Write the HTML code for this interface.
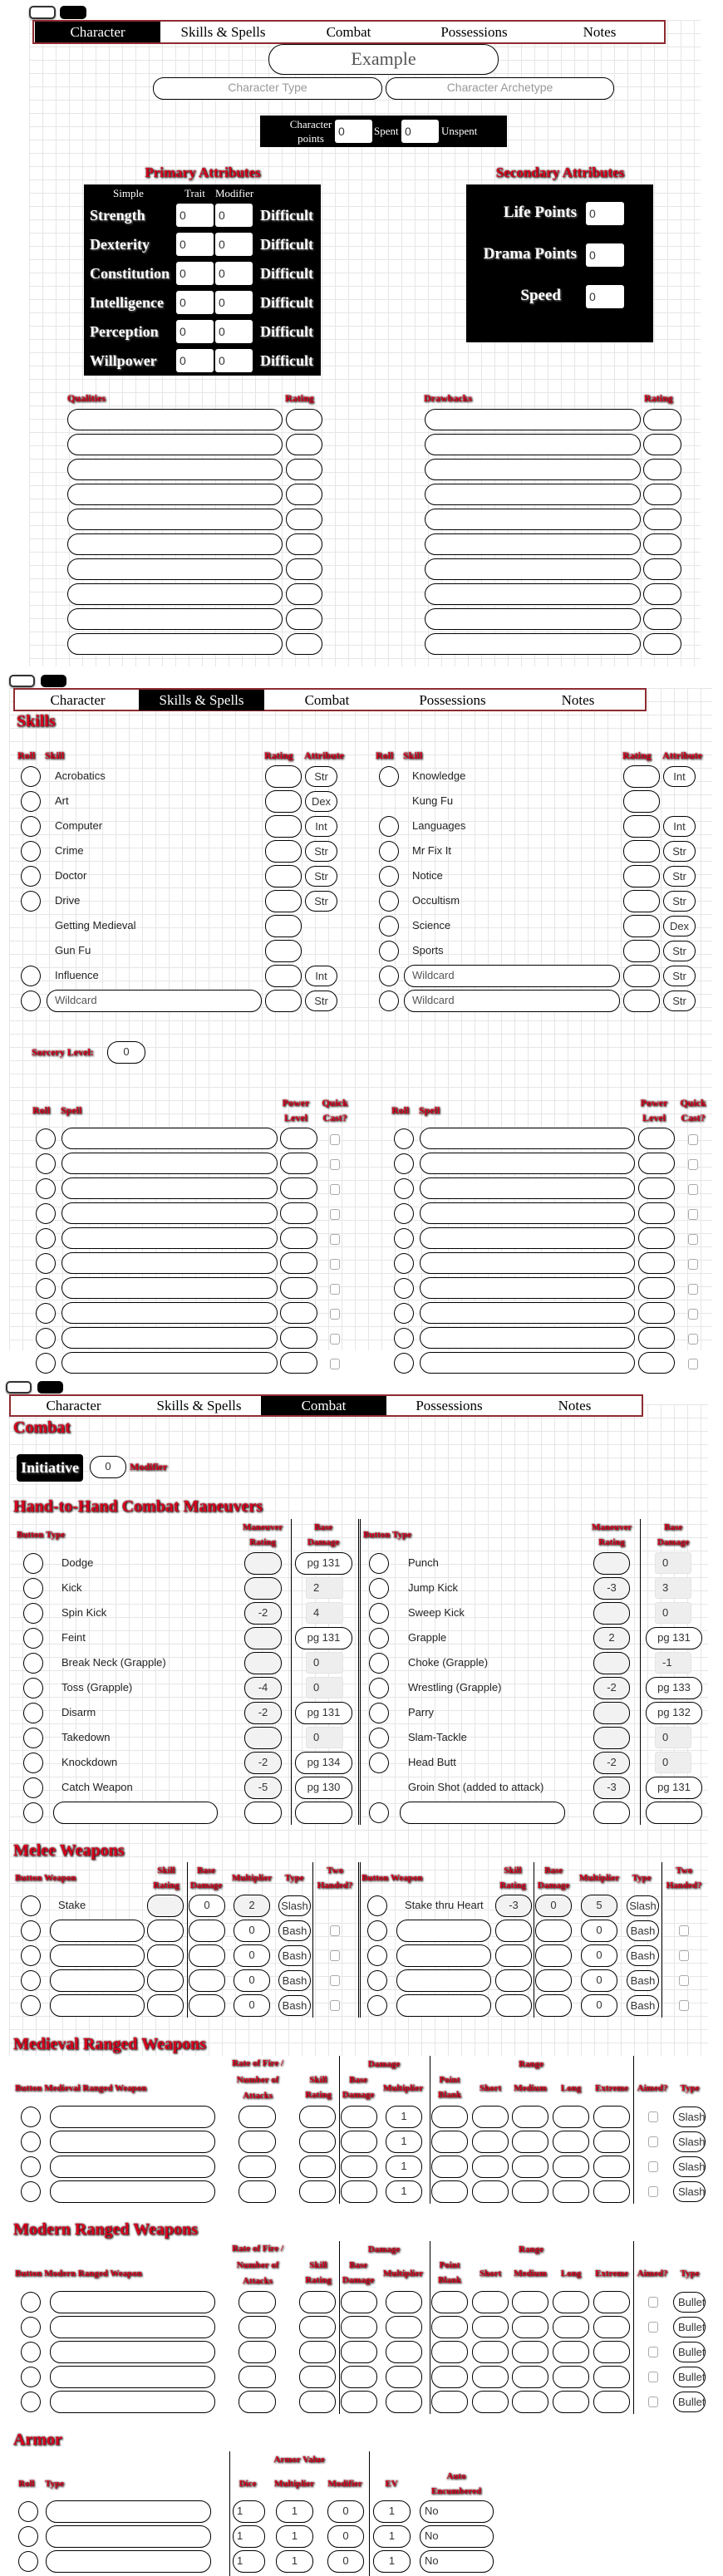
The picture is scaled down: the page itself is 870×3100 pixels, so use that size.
<!DOCTYPE html>
<html><head><meta charset="utf-8"><style>
*{margin:0;padding:0}
body{width:870px;height:3100px;position:relative;background:#fff;overflow:hidden;font-family:"Liberation Sans",sans-serif}
div,i,b,s,u{position:absolute;display:block;box-sizing:border-box;font-style:normal;text-decoration:none}
.grid{background-color:#fff;background-image:linear-gradient(#e6e6e6 1px,transparent 1px),linear-gradient(90deg,#e6e6e6 1px,transparent 1px);background-size:16px 16px}
.tb{border:2px solid #8e2b30;background:#fff;height:29px}
.tb u{top:0;height:25px;width:151px;text-align:center;font:17px/25px "Liberation Serif",serif;color:#000}
.tb u.a{background:#000;color:#fff}
.bw{width:32px;height:16px;border:2px solid #333;border-radius:5px;background:#fff;box-shadow:0 1px 2px #888}
.bk{width:32px;height:16px;border-radius:5px;background:#000}
.h{color:#d8001c;font:bold 20px/24px "Liberation Serif",serif;text-shadow:1px 1px 2px #000,0 0 2px #300;white-space:nowrap}
.s{color:#d8001c;font:bold 11px/18px "Liberation Serif",serif;text-shadow:1px 1px 2px #000,0 0 2px #300;white-space:nowrap}
.cc{transform:translateX(-50%);text-align:center}
.p{height:26px;border:1.5px solid #000;border-radius:13px;background:#fff;font:13px/23px "Liberation Sans",sans-serif;color:#333;text-align:center;overflow:hidden;white-space:nowrap}
.p.l{text-align:left;padding-left:9px;color:#555}
.p.f{background:#f2f2f2}
.g{height:26px;width:45px;background:#eee;border:1px solid #e4e4e4;border-radius:3px;font:13px/24px "Liberation Sans",sans-serif;color:#333;padding-left:8px}
.c{width:24px;height:25px;border:1.5px solid #000;border-radius:50%;background:#fff}
.k{width:12px;height:13px;border:1px solid #aaa;border-radius:3px;background:#fff}
.t{font:13px/18px "Liberation Sans",sans-serif;color:#222;white-space:nowrap}
.v{width:1px;background:#000}
.w{background:#fff;border-radius:3px;height:28px;width:45px;font:14px/28px "Liberation Sans",sans-serif;color:#333;padding-left:4px}
.wl{color:#fff;font:bold 18px/22px "Liberation Serif",serif;text-shadow:1px 1px 2px #888;white-space:nowrap}
</style></head><body>

<div class="grid" style="left:35px;top:24px;width:808px;height:778px"></div>
<div class="grid" style="left:11px;top:828px;width:846px;height:797px"></div>
<div class="grid" style="left:11px;top:1690px;width:841px;height:787px"></div>

<!-- SECTION 1 -->
<i class="bw" style="left:35px;top:7px"></i><i class="bk" style="left:72px;top:7px"></i>
<div class="tb" style="left:39px;top:24px;width:762px"><u class="a" style="left:1px">Character</u><u style="left:152px">Skills &amp; Spells</u><u style="left:303px">Combat</u><u style="left:454px">Possessions</u><u style="left:605px">Notes</u></div>
<div class="p" style="left:323px;top:53px;width:277px;height:37px;border-radius:18px;font:22px/34px 'Liberation Serif',serif;color:#555">Example</div>
<div class="p" style="left:184px;top:93px;width:276px;height:27px;color:#999;font-size:14px">Character Type</div>
<div class="p" style="left:464px;top:93px;width:275px;height:27px;color:#999;font-size:14px">Character Archetype</div>
<div style="left:313px;top:139px;width:297px;height:38px;background:#000"></div>
<div style="left:345px;top:141px;width:58px;text-align:center;color:#fff;font:13px/17px 'Liberation Serif',serif">Character<br>points</div>
<div class="w" style="left:403px;top:144px">0</div>
<div style="left:450px;top:149px;color:#fff;font:13px/18px 'Liberation Serif',serif">Spent</div>
<div class="w" style="left:483px;top:144px">0</div>
<div style="left:531px;top:149px;color:#fff;font:13px/18px 'Liberation Serif',serif">Unspent</div>

<div class="h cc" style="left:244px;top:196px;font-size:17px">Primary Attributes</div>
<div class="h cc" style="left:674px;top:196px;font-size:17px">Secondary Attributes</div>

<div style="left:101px;top:222px;width:285px;height:230px;background:#000"></div>
<div style="left:136px;top:224px;color:#fff;font:13px/18px 'Liberation Serif',serif">Simple</div>
<div style="left:222px;top:224px;color:#fff;font:13px/18px 'Liberation Serif',serif">Trait</div>
<div style="left:259px;top:224px;color:#fff;font:13px/18px 'Liberation Serif',serif">Modifier</div>
<div class="wl" style="left:108px;top:248px">Strength</div><div class="w" style="left:212px;top:245px">0</div><div class="w" style="left:259px;top:245px">0</div><div class="wl" style="left:313px;top:248px">Difficult</div>
<div class="wl" style="left:108px;top:283px">Dexterity</div><div class="w" style="left:212px;top:280px">0</div><div class="w" style="left:259px;top:280px">0</div><div class="wl" style="left:313px;top:283px">Difficult</div>
<div class="wl" style="left:108px;top:318px">Constitution</div><div class="w" style="left:212px;top:315px">0</div><div class="w" style="left:259px;top:315px">0</div><div class="wl" style="left:313px;top:318px">Difficult</div>
<div class="wl" style="left:108px;top:353px">Intelligence</div><div class="w" style="left:212px;top:350px">0</div><div class="w" style="left:259px;top:350px">0</div><div class="wl" style="left:313px;top:353px">Difficult</div>
<div class="wl" style="left:108px;top:388px">Perception</div><div class="w" style="left:212px;top:385px">0</div><div class="w" style="left:259px;top:385px">0</div><div class="wl" style="left:313px;top:388px">Difficult</div>
<div class="wl" style="left:108px;top:423px">Willpower</div><div class="w" style="left:212px;top:420px">0</div><div class="w" style="left:259px;top:420px">0</div><div class="wl" style="left:313px;top:423px">Difficult</div>

<div style="left:561px;top:222px;width:225px;height:190px;background:#000"></div>
<div class="wl" style="left:560px;top:245px;width:134px;text-align:right;font-size:19px">Life Points</div><div class="w" style="left:705px;top:243px;width:46px">0</div>
<div class="wl" style="left:560px;top:295px;width:134px;text-align:right;font-size:19px">Drama Points</div><div class="w" style="left:705px;top:293px;width:46px">0</div>
<div class="wl" style="left:560px;top:345px;width:115px;text-align:right;font-size:19px">Speed</div><div class="w" style="left:705px;top:343px;width:46px">0</div>

<div class="s" style="left:81px;top:470px;font-size:12px">Qualities</div>
<div class="s" style="left:343px;top:470px;font-size:12px">Rating</div>
<div class="s" style="left:510px;top:470px;font-size:12px">Drawbacks</div>
<div class="s" style="left:775px;top:470px;font-size:12px">Rating</div>
<i class="p" style="left:81px;top:492px;width:259px"></i><i class="p" style="left:344px;top:492px;width:44px"></i><i class="p" style="left:511px;top:492px;width:260px"></i><i class="p" style="left:774px;top:492px;width:46px"></i>
<i class="p" style="left:81px;top:522px;width:259px"></i><i class="p" style="left:344px;top:522px;width:44px"></i><i class="p" style="left:511px;top:522px;width:260px"></i><i class="p" style="left:774px;top:522px;width:46px"></i>
<i class="p" style="left:81px;top:552px;width:259px"></i><i class="p" style="left:344px;top:552px;width:44px"></i><i class="p" style="left:511px;top:552px;width:260px"></i><i class="p" style="left:774px;top:552px;width:46px"></i>
<i class="p" style="left:81px;top:582px;width:259px"></i><i class="p" style="left:344px;top:582px;width:44px"></i><i class="p" style="left:511px;top:582px;width:260px"></i><i class="p" style="left:774px;top:582px;width:46px"></i>
<i class="p" style="left:81px;top:612px;width:259px"></i><i class="p" style="left:344px;top:612px;width:44px"></i><i class="p" style="left:511px;top:612px;width:260px"></i><i class="p" style="left:774px;top:612px;width:46px"></i>
<i class="p" style="left:81px;top:642px;width:259px"></i><i class="p" style="left:344px;top:642px;width:44px"></i><i class="p" style="left:511px;top:642px;width:260px"></i><i class="p" style="left:774px;top:642px;width:46px"></i>
<i class="p" style="left:81px;top:672px;width:259px"></i><i class="p" style="left:344px;top:672px;width:44px"></i><i class="p" style="left:511px;top:672px;width:260px"></i><i class="p" style="left:774px;top:672px;width:46px"></i>
<i class="p" style="left:81px;top:702px;width:259px"></i><i class="p" style="left:344px;top:702px;width:44px"></i><i class="p" style="left:511px;top:702px;width:260px"></i><i class="p" style="left:774px;top:702px;width:46px"></i>
<i class="p" style="left:81px;top:732px;width:259px"></i><i class="p" style="left:344px;top:732px;width:44px"></i><i class="p" style="left:511px;top:732px;width:260px"></i><i class="p" style="left:774px;top:732px;width:46px"></i>
<i class="p" style="left:81px;top:762px;width:259px"></i><i class="p" style="left:344px;top:762px;width:44px"></i><i class="p" style="left:511px;top:762px;width:260px"></i><i class="p" style="left:774px;top:762px;width:46px"></i>

<!-- SECTION 2 -->
<i class="bw" style="left:11px;top:812px;width:31px;height:15px"></i><i class="bk" style="left:49px;top:812px;width:31px;height:15px"></i>
<div class="tb" style="left:16px;top:828px;width:762px;height:28px"><u style="left:0">Character</u><u class="a" style="left:149px">Skills &amp; Spells</u><u style="left:300px">Combat</u><u style="left:451px">Possessions</u><u style="left:602px">Notes</u></div>
<div class="h" style="left:20px;top:856px">Skills</div>
<div class="s" style="left:21px;top:900px;font-size:12px">Roll</div><div class="s" style="left:54px;top:900px;font-size:12px">Skill</div><div class="s" style="left:318px;top:900px;font-size:12px">Rating</div><div class="s" style="left:366px;top:900px;font-size:12px">Attribute</div>
<div class="s" style="left:452px;top:900px;font-size:12px">Roll</div><div class="s" style="left:485px;top:900px;font-size:12px">Skill</div><div class="s" style="left:749px;top:900px;font-size:12px">Rating</div><div class="s" style="left:797px;top:900px;font-size:12px">Attribute</div>

<i class="c" style="left:25px;top:922px"></i><div class="t" style="left:66px;top:925px">Acrobatics</div><i class="p" style="left:319px;top:921px;width:44px;height:27px"></i><div class="p" style="left:367px;top:922px;width:39px;height:25px">Str</div>
<i class="c" style="left:25px;top:952px"></i><div class="t" style="left:66px;top:955px">Art</div><i class="p" style="left:319px;top:951px;width:44px;height:27px"></i><div class="p" style="left:367px;top:952px;width:39px;height:25px">Dex</div>
<i class="c" style="left:25px;top:982px"></i><div class="t" style="left:66px;top:985px">Computer</div><i class="p" style="left:319px;top:981px;width:44px;height:27px"></i><div class="p" style="left:367px;top:982px;width:39px;height:25px">Int</div>
<i class="c" style="left:25px;top:1012px"></i><div class="t" style="left:66px;top:1015px">Crime</div><i class="p" style="left:319px;top:1011px;width:44px;height:27px"></i><div class="p" style="left:367px;top:1012px;width:39px;height:25px">Str</div>
<i class="c" style="left:25px;top:1042px"></i><div class="t" style="left:66px;top:1045px">Doctor</div><i class="p" style="left:319px;top:1041px;width:44px;height:27px"></i><div class="p" style="left:367px;top:1042px;width:39px;height:25px">Str</div>
<i class="c" style="left:25px;top:1072px"></i><div class="t" style="left:66px;top:1075px">Drive</div><i class="p" style="left:319px;top:1071px;width:44px;height:27px"></i><div class="p" style="left:367px;top:1072px;width:39px;height:25px">Str</div>
<div class="t" style="left:66px;top:1105px">Getting Medieval</div><i class="p" style="left:319px;top:1101px;width:44px;height:27px"></i>
<div class="t" style="left:66px;top:1135px">Gun Fu</div><i class="p" style="left:319px;top:1131px;width:44px;height:27px"></i>
<i class="c" style="left:25px;top:1162px"></i><div class="t" style="left:66px;top:1165px">Influence</div><i class="p" style="left:319px;top:1161px;width:44px;height:27px"></i><div class="p" style="left:367px;top:1162px;width:39px;height:25px">Int</div>
<i class="c" style="left:25px;top:1192px"></i><div class="p l" style="left:56px;top:1191px;width:259px;height:27px">Wildcard</div><i class="p" style="left:319px;top:1191px;width:44px;height:27px"></i><div class="p" style="left:367px;top:1192px;width:39px;height:25px">Str</div>

<i class="c" style="left:456px;top:922px"></i><div class="t" style="left:496px;top:925px">Knowledge</div><i class="p" style="left:750px;top:921px;width:44px;height:27px"></i><div class="p" style="left:798px;top:922px;width:39px;height:25px">Int</div>
<div class="t" style="left:496px;top:955px">Kung Fu</div><i class="p" style="left:750px;top:951px;width:44px;height:27px"></i>
<i class="c" style="left:456px;top:982px"></i><div class="t" style="left:496px;top:985px">Languages</div><i class="p" style="left:750px;top:981px;width:44px;height:27px"></i><div class="p" style="left:798px;top:982px;width:39px;height:25px">Int</div>
<i class="c" style="left:456px;top:1012px"></i><div class="t" style="left:496px;top:1015px">Mr Fix It</div><i class="p" style="left:750px;top:1011px;width:44px;height:27px"></i><div class="p" style="left:798px;top:1012px;width:39px;height:25px">Str</div>
<i class="c" style="left:456px;top:1042px"></i><div class="t" style="left:496px;top:1045px">Notice</div><i class="p" style="left:750px;top:1041px;width:44px;height:27px"></i><div class="p" style="left:798px;top:1042px;width:39px;height:25px">Str</div>
<i class="c" style="left:456px;top:1072px"></i><div class="t" style="left:496px;top:1075px">Occultism</div><i class="p" style="left:750px;top:1071px;width:44px;height:27px"></i><div class="p" style="left:798px;top:1072px;width:39px;height:25px">Str</div>
<i class="c" style="left:456px;top:1102px"></i><div class="t" style="left:496px;top:1105px">Science</div><i class="p" style="left:750px;top:1101px;width:44px;height:27px"></i><div class="p" style="left:798px;top:1102px;width:39px;height:25px">Dex</div>
<i class="c" style="left:456px;top:1132px"></i><div class="t" style="left:496px;top:1135px">Sports</div><i class="p" style="left:750px;top:1131px;width:44px;height:27px"></i><div class="p" style="left:798px;top:1132px;width:39px;height:25px">Str</div>
<i class="c" style="left:456px;top:1162px"></i><div class="p l" style="left:486px;top:1161px;width:260px;height:27px">Wildcard</div><i class="p" style="left:750px;top:1161px;width:44px;height:27px"></i><div class="p" style="left:798px;top:1162px;width:39px;height:25px">Str</div>
<i class="c" style="left:456px;top:1192px"></i><div class="p l" style="left:486px;top:1191px;width:260px;height:27px">Wildcard</div><i class="p" style="left:750px;top:1191px;width:44px;height:27px"></i><div class="p" style="left:798px;top:1192px;width:39px;height:25px">Str</div>

<div class="s" style="left:38px;top:1257px;font-size:12px">Sorcery Level:</div>
<div class="p" style="left:129px;top:1253px;width:46px;height:27px">0</div>

<div class="s" style="left:39px;top:1327px;font-size:12px">Roll</div><div class="s" style="left:73px;top:1327px;font-size:12px">Spell</div>
<div class="s cc" style="left:356px;top:1318px;font-size:12px">Power<br>Level</div><div class="s cc" style="left:403px;top:1318px;font-size:12px">Quick<br>Cast?</div>
<div class="s" style="left:471px;top:1327px;font-size:12px">Roll</div><div class="s" style="left:504px;top:1327px;font-size:12px">Spell</div>
<div class="s cc" style="left:787px;top:1318px;font-size:12px">Power<br>Level</div><div class="s cc" style="left:834px;top:1318px;font-size:12px">Quick<br>Cast?</div>

<i class="c" style="left:43px;top:1358px"></i><i class="p" style="left:74px;top:1357px;width:260px"></i><i class="p" style="left:337px;top:1357px;width:45px"></i><i class="k" style="left:397px;top:1365px"></i><i class="c" style="left:474px;top:1358px"></i><i class="p" style="left:505px;top:1357px;width:259px"></i><i class="p" style="left:768px;top:1357px;width:44px"></i><i class="k" style="left:828px;top:1365px"></i>
<i class="c" style="left:43px;top:1388px"></i><i class="p" style="left:74px;top:1387px;width:260px"></i><i class="p" style="left:337px;top:1387px;width:45px"></i><i class="k" style="left:397px;top:1395px"></i><i class="c" style="left:474px;top:1388px"></i><i class="p" style="left:505px;top:1387px;width:259px"></i><i class="p" style="left:768px;top:1387px;width:44px"></i><i class="k" style="left:828px;top:1395px"></i>
<i class="c" style="left:43px;top:1418px"></i><i class="p" style="left:74px;top:1417px;width:260px"></i><i class="p" style="left:337px;top:1417px;width:45px"></i><i class="k" style="left:397px;top:1425px"></i><i class="c" style="left:474px;top:1418px"></i><i class="p" style="left:505px;top:1417px;width:259px"></i><i class="p" style="left:768px;top:1417px;width:44px"></i><i class="k" style="left:828px;top:1425px"></i>
<i class="c" style="left:43px;top:1448px"></i><i class="p" style="left:74px;top:1447px;width:260px"></i><i class="p" style="left:337px;top:1447px;width:45px"></i><i class="k" style="left:397px;top:1455px"></i><i class="c" style="left:474px;top:1448px"></i><i class="p" style="left:505px;top:1447px;width:259px"></i><i class="p" style="left:768px;top:1447px;width:44px"></i><i class="k" style="left:828px;top:1455px"></i>
<i class="c" style="left:43px;top:1478px"></i><i class="p" style="left:74px;top:1477px;width:260px"></i><i class="p" style="left:337px;top:1477px;width:45px"></i><i class="k" style="left:397px;top:1485px"></i><i class="c" style="left:474px;top:1478px"></i><i class="p" style="left:505px;top:1477px;width:259px"></i><i class="p" style="left:768px;top:1477px;width:44px"></i><i class="k" style="left:828px;top:1485px"></i>
<i class="c" style="left:43px;top:1508px"></i><i class="p" style="left:74px;top:1507px;width:260px"></i><i class="p" style="left:337px;top:1507px;width:45px"></i><i class="k" style="left:397px;top:1515px"></i><i class="c" style="left:474px;top:1508px"></i><i class="p" style="left:505px;top:1507px;width:259px"></i><i class="p" style="left:768px;top:1507px;width:44px"></i><i class="k" style="left:828px;top:1515px"></i>
<i class="c" style="left:43px;top:1538px"></i><i class="p" style="left:74px;top:1537px;width:260px"></i><i class="p" style="left:337px;top:1537px;width:45px"></i><i class="k" style="left:397px;top:1545px"></i><i class="c" style="left:474px;top:1538px"></i><i class="p" style="left:505px;top:1537px;width:259px"></i><i class="p" style="left:768px;top:1537px;width:44px"></i><i class="k" style="left:828px;top:1545px"></i>
<i class="c" style="left:43px;top:1568px"></i><i class="p" style="left:74px;top:1567px;width:260px"></i><i class="p" style="left:337px;top:1567px;width:45px"></i><i class="k" style="left:397px;top:1575px"></i><i class="c" style="left:474px;top:1568px"></i><i class="p" style="left:505px;top:1567px;width:259px"></i><i class="p" style="left:768px;top:1567px;width:44px"></i><i class="k" style="left:828px;top:1575px"></i>
<i class="c" style="left:43px;top:1598px"></i><i class="p" style="left:74px;top:1597px;width:260px"></i><i class="p" style="left:337px;top:1597px;width:45px"></i><i class="k" style="left:397px;top:1605px"></i><i class="c" style="left:474px;top:1598px"></i><i class="p" style="left:505px;top:1597px;width:259px"></i><i class="p" style="left:768px;top:1597px;width:44px"></i><i class="k" style="left:828px;top:1605px"></i>
<i class="c" style="left:43px;top:1628px"></i><i class="p" style="left:74px;top:1627px;width:260px"></i><i class="p" style="left:337px;top:1627px;width:45px"></i><i class="k" style="left:397px;top:1635px"></i><i class="c" style="left:474px;top:1628px"></i><i class="p" style="left:505px;top:1627px;width:259px"></i><i class="p" style="left:768px;top:1627px;width:44px"></i><i class="k" style="left:828px;top:1635px"></i>

<!-- SECTION 3 -->
<i class="bw" style="left:7px;top:1662px;width:31px;height:15px"></i><i class="bk" style="left:45px;top:1662px;width:31px;height:15px"></i>
<div class="tb" style="left:11px;top:1678px;width:763px;height:27px"><u style="left:0;height:23px;line-height:23px">Character</u><u style="left:151px;height:23px;line-height:23px">Skills &amp; Spells</u><u class="a" style="left:301px;height:23px;line-height:23px">Combat</u><u style="left:452px;height:23px;line-height:23px">Possessions</u><u style="left:603px;height:23px;line-height:23px">Notes</u></div>
<div class="h" style="left:16px;top:1706px">Combat</div>
<div style="left:20px;top:1750px;width:80px;height:33px;background:#000;border-radius:4px;color:#fff;font:bold 18px/33px 'Liberation Serif',serif;text-align:center;text-shadow:1px 1px 2px #888">Initiative</div>
<div class="p" style="left:108px;top:1752px;width:44px;height:27px">0</div>
<div class="s" style="left:156px;top:1756px;font-size:12px">Modifier</div>
<div class="h" style="left:16px;top:1801px">Hand-to-Hand Combat Maneuvers</div>

<div class="v" style="left:350px;top:1828px;height:368px"></div><div class="v" style="left:431px;top:1828px;height:368px"></div><div class="v" style="left:433px;top:1828px;height:368px"></div><div class="v" style="left:770px;top:1828px;height:368px"></div>
<div class="s" style="left:20px;top:1838px">Button Type</div><div class="s cc" style="left:316px;top:1829px">Maneuver<br>Rating</div><div class="s cc" style="left:389px;top:1829px">Base<br>Damage</div>
<div class="s" style="left:437px;top:1838px">Button Type</div><div class="s cc" style="left:736px;top:1829px">Maneuver<br>Rating</div><div class="s cc" style="left:810px;top:1829px">Base<br>Damage</div>

<i class="c" style="left:28px;top:1869px"></i><div class="t" style="left:74px;top:1872px">Dodge</div><i class="p f" style="left:294px;top:1868px;width:45px;height:27px"></i><div class="p" style="left:355px;top:1868px;width:69px;height:27px">pg 131</div>
<i class="c" style="left:444px;top:1869px"></i><div class="t" style="left:491px;top:1872px">Punch</div><i class="p f" style="left:714px;top:1868px;width:44px;height:27px"></i><div class="g" style="left:788px;top:1868px;width:44px">0</div>
<i class="c" style="left:28px;top:1899px"></i><div class="t" style="left:74px;top:1902px">Kick</div><i class="p f" style="left:294px;top:1898px;width:45px;height:27px"></i><div class="g" style="left:368px;top:1898px">2</div>
<i class="c" style="left:444px;top:1899px"></i><div class="t" style="left:491px;top:1902px">Jump Kick</div><div class="p f" style="left:714px;top:1898px;width:44px;height:27px">-3</div><div class="g" style="left:788px;top:1898px;width:44px">3</div>
<i class="c" style="left:28px;top:1929px"></i><div class="t" style="left:74px;top:1932px">Spin Kick</div><div class="p f" style="left:294px;top:1928px;width:45px;height:27px">-2</div><div class="g" style="left:368px;top:1928px">4</div>
<i class="c" style="left:444px;top:1929px"></i><div class="t" style="left:491px;top:1932px">Sweep Kick</div><i class="p f" style="left:714px;top:1928px;width:44px;height:27px"></i><div class="g" style="left:788px;top:1928px;width:44px">0</div>
<i class="c" style="left:28px;top:1959px"></i><div class="t" style="left:74px;top:1962px">Feint</div><i class="p f" style="left:294px;top:1958px;width:45px;height:27px"></i><div class="p" style="left:355px;top:1958px;width:69px;height:27px">pg 131</div>
<i class="c" style="left:444px;top:1959px"></i><div class="t" style="left:491px;top:1962px">Grapple</div><div class="p f" style="left:714px;top:1958px;width:44px;height:27px">2</div><div class="p" style="left:777px;top:1958px;width:68px;height:27px">pg 131</div>
<i class="c" style="left:28px;top:1989px"></i><div class="t" style="left:74px;top:1992px">Break Neck (Grapple)</div><i class="p f" style="left:294px;top:1988px;width:45px;height:27px"></i><div class="g" style="left:368px;top:1988px">0</div>
<i class="c" style="left:444px;top:1989px"></i><div class="t" style="left:491px;top:1992px">Choke (Grapple)</div><i class="p f" style="left:714px;top:1988px;width:44px;height:27px"></i><div class="g" style="left:788px;top:1988px;width:44px">-1</div>
<i class="c" style="left:28px;top:2019px"></i><div class="t" style="left:74px;top:2022px">Toss (Grapple)</div><div class="p f" style="left:294px;top:2018px;width:45px;height:27px">-4</div><div class="g" style="left:368px;top:2018px">0</div>
<i class="c" style="left:444px;top:2019px"></i><div class="t" style="left:491px;top:2022px">Wrestling (Grapple)</div><div class="p f" style="left:714px;top:2018px;width:44px;height:27px">-2</div><div class="p" style="left:777px;top:2018px;width:68px;height:27px">pg 133</div>
<i class="c" style="left:28px;top:2049px"></i><div class="t" style="left:74px;top:2052px">Disarm</div><div class="p f" style="left:294px;top:2048px;width:45px;height:27px">-2</div><div class="p" style="left:355px;top:2048px;width:69px;height:27px">pg 131</div>
<i class="c" style="left:444px;top:2049px"></i><div class="t" style="left:491px;top:2052px">Parry</div><i class="p f" style="left:714px;top:2048px;width:44px;height:27px"></i><div class="p" style="left:777px;top:2048px;width:68px;height:27px">pg 132</div>
<i class="c" style="left:28px;top:2079px"></i><div class="t" style="left:74px;top:2082px">Takedown</div><i class="p f" style="left:294px;top:2078px;width:45px;height:27px"></i><div class="g" style="left:368px;top:2078px">0</div>
<i class="c" style="left:444px;top:2079px"></i><div class="t" style="left:491px;top:2082px">Slam-Tackle</div><i class="p f" style="left:714px;top:2078px;width:44px;height:27px"></i><div class="g" style="left:788px;top:2078px;width:44px">0</div>
<i class="c" style="left:28px;top:2109px"></i><div class="t" style="left:74px;top:2112px">Knockdown</div><div class="p f" style="left:294px;top:2108px;width:45px;height:27px">-2</div><div class="p" style="left:355px;top:2108px;width:69px;height:27px">pg 134</div>
<i class="c" style="left:444px;top:2109px"></i><div class="t" style="left:491px;top:2112px">Head Butt</div><div class="p f" style="left:714px;top:2108px;width:44px;height:27px">-2</div><div class="g" style="left:788px;top:2108px;width:44px">0</div>
<i class="c" style="left:28px;top:2139px"></i><div class="t" style="left:74px;top:2142px">Catch Weapon</div><div class="p f" style="left:294px;top:2138px;width:45px;height:27px">-5</div><div class="p" style="left:355px;top:2138px;width:69px;height:27px">pg 130</div>
<div class="t" style="left:491px;top:2142px">Groin Shot (added to attack)</div><div class="p f" style="left:714px;top:2138px;width:44px;height:27px">-3</div><div class="p" style="left:777px;top:2138px;width:68px;height:27px">pg 131</div>
<i class="c" style="left:28px;top:2169px"></i><i class="p" style="left:64px;top:2168px;width:198px;height:27px"></i><i class="p" style="left:294px;top:2168px;width:45px;height:27px"></i><i class="p" style="left:355px;top:2168px;width:69px;height:27px"></i>
<i class="c" style="left:444px;top:2169px"></i><i class="p" style="left:481px;top:2168px;width:199px;height:27px"></i><i class="p" style="left:714px;top:2168px;width:44px;height:27px"></i><i class="p" style="left:777px;top:2168px;width:68px;height:27px"></i>

<div class="h" style="left:16px;top:2215px">Melee Weapons</div>
<div class="v" style="left:225px;top:2241px;height:187px"></div><div class="v" style="left:376px;top:2241px;height:187px"></div><div class="v" style="left:431px;top:2241px;height:187px"></div><div class="v" style="left:433px;top:2241px;height:187px"></div><div class="v" style="left:642px;top:2241px;height:187px"></div><div class="v" style="left:796px;top:2241px;height:187px"></div>
<div class="s" style="left:18px;top:2251px">Button Weapon</div><div class="s cc" style="left:200px;top:2242px">Skill<br>Rating</div><div class="s cc" style="left:248px;top:2242px">Base<br>Damage</div><div class="s cc" style="left:303px;top:2251px">Multiplier</div><div class="s cc" style="left:354px;top:2251px">Type</div><div class="s cc" style="left:403px;top:2242px">Two<br>Handed?</div>
<div class="s" style="left:435px;top:2251px">Button Weapon</div><div class="s cc" style="left:617px;top:2242px">Skill<br>Rating</div><div class="s cc" style="left:666px;top:2242px">Base<br>Damage</div><div class="s cc" style="left:721px;top:2251px">Multiplier</div><div class="s cc" style="left:772px;top:2251px">Type</div><div class="s cc" style="left:823px;top:2242px">Two<br>Handed?</div>

<i class="c" style="left:25px;top:2281px"></i><div class="t" style="left:70px;top:2284px">Stake</div><i class="p f" style="left:177px;top:2280px;width:44px;height:27px"></i><div class="p" style="left:227px;top:2280px;width:44px;height:27px">0</div><div class="p f" style="left:281px;top:2280px;width:44px;height:27px">2</div><div class="p" style="left:335px;top:2281px;width:39px;height:25px">Slash</div>
<i class="c" style="left:442px;top:2281px"></i><div class="t" style="left:487px;top:2284px">Stake thru Heart</div><div class="p f" style="left:596px;top:2280px;width:44px;height:27px">-3</div><div class="p f" style="left:644px;top:2280px;width:44px;height:27px">0</div><div class="p f" style="left:699px;top:2280px;width:44px;height:27px">5</div><div class="p" style="left:754px;top:2281px;width:39px;height:25px">Slash</div>

<i class="c" style="left:25px;top:2311px"></i><i class="p" style="left:60px;top:2310px;width:114px;height:27px"></i><i class="p" style="left:177px;top:2310px;width:44px;height:27px"></i><i class="p" style="left:227px;top:2310px;width:44px;height:27px"></i><div class="p" style="left:281px;top:2310px;width:44px;height:27px">0</div><div class="p" style="left:335px;top:2311px;width:39px;height:25px">Bash</div><i class="k" style="left:397px;top:2317px"></i>
<i class="c" style="left:442px;top:2311px"></i><i class="p" style="left:477px;top:2310px;width:114px;height:27px"></i><i class="p" style="left:596px;top:2310px;width:44px;height:27px"></i><i class="p" style="left:644px;top:2310px;width:44px;height:27px"></i><div class="p" style="left:699px;top:2310px;width:44px;height:27px">0</div><div class="p" style="left:754px;top:2311px;width:39px;height:25px">Bash</div><i class="k" style="left:817px;top:2317px"></i>
<i class="c" style="left:25px;top:2341px"></i><i class="p" style="left:60px;top:2340px;width:114px;height:27px"></i><i class="p" style="left:177px;top:2340px;width:44px;height:27px"></i><i class="p" style="left:227px;top:2340px;width:44px;height:27px"></i><div class="p" style="left:281px;top:2340px;width:44px;height:27px">0</div><div class="p" style="left:335px;top:2341px;width:39px;height:25px">Bash</div><i class="k" style="left:397px;top:2347px"></i>
<i class="c" style="left:442px;top:2341px"></i><i class="p" style="left:477px;top:2340px;width:114px;height:27px"></i><i class="p" style="left:596px;top:2340px;width:44px;height:27px"></i><i class="p" style="left:644px;top:2340px;width:44px;height:27px"></i><div class="p" style="left:699px;top:2340px;width:44px;height:27px">0</div><div class="p" style="left:754px;top:2341px;width:39px;height:25px">Bash</div><i class="k" style="left:817px;top:2347px"></i>
<i class="c" style="left:25px;top:2371px"></i><i class="p" style="left:60px;top:2370px;width:114px;height:27px"></i><i class="p" style="left:177px;top:2370px;width:44px;height:27px"></i><i class="p" style="left:227px;top:2370px;width:44px;height:27px"></i><div class="p" style="left:281px;top:2370px;width:44px;height:27px">0</div><div class="p" style="left:335px;top:2371px;width:39px;height:25px">Bash</div><i class="k" style="left:397px;top:2377px"></i>
<i class="c" style="left:442px;top:2371px"></i><i class="p" style="left:477px;top:2370px;width:114px;height:27px"></i><i class="p" style="left:596px;top:2370px;width:44px;height:27px"></i><i class="p" style="left:644px;top:2370px;width:44px;height:27px"></i><div class="p" style="left:699px;top:2370px;width:44px;height:27px">0</div><div class="p" style="left:754px;top:2371px;width:39px;height:25px">Bash</div><i class="k" style="left:817px;top:2377px"></i>
<i class="c" style="left:25px;top:2401px"></i><i class="p" style="left:60px;top:2400px;width:114px;height:27px"></i><i class="p" style="left:177px;top:2400px;width:44px;height:27px"></i><i class="p" style="left:227px;top:2400px;width:44px;height:27px"></i><div class="p" style="left:281px;top:2400px;width:44px;height:27px">0</div><div class="p" style="left:335px;top:2401px;width:39px;height:25px">Bash</div><i class="k" style="left:397px;top:2407px"></i>
<i class="c" style="left:442px;top:2401px"></i><i class="p" style="left:477px;top:2400px;width:114px;height:27px"></i><i class="p" style="left:596px;top:2400px;width:44px;height:27px"></i><i class="p" style="left:644px;top:2400px;width:44px;height:27px"></i><div class="p" style="left:699px;top:2400px;width:44px;height:27px">0</div><div class="p" style="left:754px;top:2401px;width:39px;height:25px">Bash</div><i class="k" style="left:817px;top:2407px"></i>

<!-- Medieval ranged -->
<div class="h" style="left:16px;top:2448px">Medieval Ranged Weapons</div>
<div style="left:0;top:2474px;width:870px;height:626px;background:#fff"></div>
<div class="v" style="left:408px;top:2474px;height:178px"></div><div class="v" style="left:517px;top:2474px;height:178px"></div><div class="v" style="left:762px;top:2474px;height:178px"></div>
<div class="s" style="left:18px;top:2504px">Button Medieval Ranged Weapon</div>
<div class="s cc" style="left:310px;top:2474px;line-height:19.5px">Rate of Fire /<br>Number of<br>Attacks</div>
<div class="s cc" style="left:383px;top:2494px">Skill<br>Rating</div>
<div class="s cc" style="left:462px;top:2475px">Damage</div>
<div class="s cc" style="left:431px;top:2494px">Base<br>Damage</div><div class="s cc" style="left:485px;top:2504px">Multiplier</div>
<div class="s cc" style="left:639px;top:2475px">Range</div>
<div class="s cc" style="left:541px;top:2494px">Point<br>Blank</div><div class="s cc" style="left:590px;top:2504px">Short</div><div class="s cc" style="left:638px;top:2504px">Medium</div><div class="s cc" style="left:687px;top:2504px">Long</div><div class="s cc" style="left:736px;top:2504px">Extreme</div><div class="s cc" style="left:785px;top:2504px">Aimed?</div><div class="s cc" style="left:830px;top:2504px">Type</div>

<i class="c" style="left:25px;top:2535px"></i><i class="p" style="left:60px;top:2534px;width:199px;height:27px"></i><i class="p" style="left:287px;top:2534px;width:45px;height:27px"></i><i class="p" style="left:360px;top:2534px;width:44px;height:27px"></i><i class="p" style="left:410px;top:2534px;width:44px;height:27px"></i><div class="p" style="left:464px;top:2534px;width:44px;height:27px">1</div><i class="p" style="left:519px;top:2534px;width:44px;height:27px"></i><i class="p" style="left:568px;top:2534px;width:44px;height:27px"></i><i class="p" style="left:616px;top:2534px;width:44px;height:27px"></i><i class="p" style="left:665px;top:2534px;width:44px;height:27px"></i><i class="p" style="left:714px;top:2534px;width:44px;height:27px"></i><i class="k" style="left:780px;top:2541px"></i><div class="p" style="left:810px;top:2535px;width:39px;height:25px;text-align:left;padding-left:5px">Slash</div>
<i class="c" style="left:25px;top:2565px"></i><i class="p" style="left:60px;top:2564px;width:199px;height:27px"></i><i class="p" style="left:287px;top:2564px;width:45px;height:27px"></i><i class="p" style="left:360px;top:2564px;width:44px;height:27px"></i><i class="p" style="left:410px;top:2564px;width:44px;height:27px"></i><div class="p" style="left:464px;top:2564px;width:44px;height:27px">1</div><i class="p" style="left:519px;top:2564px;width:44px;height:27px"></i><i class="p" style="left:568px;top:2564px;width:44px;height:27px"></i><i class="p" style="left:616px;top:2564px;width:44px;height:27px"></i><i class="p" style="left:665px;top:2564px;width:44px;height:27px"></i><i class="p" style="left:714px;top:2564px;width:44px;height:27px"></i><i class="k" style="left:780px;top:2571px"></i><div class="p" style="left:810px;top:2565px;width:39px;height:25px;text-align:left;padding-left:5px">Slash</div>
<i class="c" style="left:25px;top:2595px"></i><i class="p" style="left:60px;top:2594px;width:199px;height:27px"></i><i class="p" style="left:287px;top:2594px;width:45px;height:27px"></i><i class="p" style="left:360px;top:2594px;width:44px;height:27px"></i><i class="p" style="left:410px;top:2594px;width:44px;height:27px"></i><div class="p" style="left:464px;top:2594px;width:44px;height:27px">1</div><i class="p" style="left:519px;top:2594px;width:44px;height:27px"></i><i class="p" style="left:568px;top:2594px;width:44px;height:27px"></i><i class="p" style="left:616px;top:2594px;width:44px;height:27px"></i><i class="p" style="left:665px;top:2594px;width:44px;height:27px"></i><i class="p" style="left:714px;top:2594px;width:44px;height:27px"></i><i class="k" style="left:780px;top:2601px"></i><div class="p" style="left:810px;top:2595px;width:39px;height:25px;text-align:left;padding-left:5px">Slash</div>
<i class="c" style="left:25px;top:2625px"></i><i class="p" style="left:60px;top:2624px;width:199px;height:27px"></i><i class="p" style="left:287px;top:2624px;width:45px;height:27px"></i><i class="p" style="left:360px;top:2624px;width:44px;height:27px"></i><i class="p" style="left:410px;top:2624px;width:44px;height:27px"></i><div class="p" style="left:464px;top:2624px;width:44px;height:27px">1</div><i class="p" style="left:519px;top:2624px;width:44px;height:27px"></i><i class="p" style="left:568px;top:2624px;width:44px;height:27px"></i><i class="p" style="left:616px;top:2624px;width:44px;height:27px"></i><i class="p" style="left:665px;top:2624px;width:44px;height:27px"></i><i class="p" style="left:714px;top:2624px;width:44px;height:27px"></i><i class="k" style="left:780px;top:2631px"></i><div class="p" style="left:810px;top:2625px;width:39px;height:25px;text-align:left;padding-left:5px">Slash</div>

<!-- Modern ranged -->
<div class="h" style="left:16px;top:2671px">Modern Ranged Weapons</div>
<div class="v" style="left:408px;top:2697px;height:208px"></div><div class="v" style="left:517px;top:2697px;height:208px"></div><div class="v" style="left:762px;top:2697px;height:208px"></div>
<div class="s" style="left:18px;top:2727px">Button Modern Ranged Weapon</div>
<div class="s cc" style="left:310px;top:2697px;line-height:19.5px">Rate of Fire /<br>Number of<br>Attacks</div>
<div class="s cc" style="left:383px;top:2717px">Skill<br>Rating</div>
<div class="s cc" style="left:462px;top:2698px">Damage</div>
<div class="s cc" style="left:431px;top:2717px">Base<br>Damage</div><div class="s cc" style="left:485px;top:2727px">Multiplier</div>
<div class="s cc" style="left:639px;top:2698px">Range</div>
<div class="s cc" style="left:541px;top:2717px">Point<br>Blank</div><div class="s cc" style="left:590px;top:2727px">Short</div><div class="s cc" style="left:638px;top:2727px">Medium</div><div class="s cc" style="left:687px;top:2727px">Long</div><div class="s cc" style="left:736px;top:2727px">Extreme</div><div class="s cc" style="left:785px;top:2727px">Aimed?</div><div class="s cc" style="left:830px;top:2727px">Type</div>

<i class="c" style="left:25px;top:2758px"></i><i class="p" style="left:60px;top:2757px;width:199px;height:27px"></i><i class="p" style="left:287px;top:2757px;width:45px;height:27px"></i><i class="p" style="left:360px;top:2757px;width:44px;height:27px"></i><i class="p" style="left:410px;top:2757px;width:44px;height:27px"></i><i class="p" style="left:464px;top:2757px;width:44px;height:27px"></i><i class="p" style="left:519px;top:2757px;width:44px;height:27px"></i><i class="p" style="left:568px;top:2757px;width:44px;height:27px"></i><i class="p" style="left:616px;top:2757px;width:44px;height:27px"></i><i class="p" style="left:665px;top:2757px;width:44px;height:27px"></i><i class="p" style="left:714px;top:2757px;width:44px;height:27px"></i><i class="k" style="left:780px;top:2764px"></i><div class="p" style="left:810px;top:2758px;width:39px;height:25px;text-align:left;padding-left:5px">Bullet</div>
<i class="c" style="left:25px;top:2788px"></i><i class="p" style="left:60px;top:2787px;width:199px;height:27px"></i><i class="p" style="left:287px;top:2787px;width:45px;height:27px"></i><i class="p" style="left:360px;top:2787px;width:44px;height:27px"></i><i class="p" style="left:410px;top:2787px;width:44px;height:27px"></i><i class="p" style="left:464px;top:2787px;width:44px;height:27px"></i><i class="p" style="left:519px;top:2787px;width:44px;height:27px"></i><i class="p" style="left:568px;top:2787px;width:44px;height:27px"></i><i class="p" style="left:616px;top:2787px;width:44px;height:27px"></i><i class="p" style="left:665px;top:2787px;width:44px;height:27px"></i><i class="p" style="left:714px;top:2787px;width:44px;height:27px"></i><i class="k" style="left:780px;top:2794px"></i><div class="p" style="left:810px;top:2788px;width:39px;height:25px;text-align:left;padding-left:5px">Bullet</div>
<i class="c" style="left:25px;top:2818px"></i><i class="p" style="left:60px;top:2817px;width:199px;height:27px"></i><i class="p" style="left:287px;top:2817px;width:45px;height:27px"></i><i class="p" style="left:360px;top:2817px;width:44px;height:27px"></i><i class="p" style="left:410px;top:2817px;width:44px;height:27px"></i><i class="p" style="left:464px;top:2817px;width:44px;height:27px"></i><i class="p" style="left:519px;top:2817px;width:44px;height:27px"></i><i class="p" style="left:568px;top:2817px;width:44px;height:27px"></i><i class="p" style="left:616px;top:2817px;width:44px;height:27px"></i><i class="p" style="left:665px;top:2817px;width:44px;height:27px"></i><i class="p" style="left:714px;top:2817px;width:44px;height:27px"></i><i class="k" style="left:780px;top:2824px"></i><div class="p" style="left:810px;top:2818px;width:39px;height:25px;text-align:left;padding-left:5px">Bullet</div>
<i class="c" style="left:25px;top:2848px"></i><i class="p" style="left:60px;top:2847px;width:199px;height:27px"></i><i class="p" style="left:287px;top:2847px;width:45px;height:27px"></i><i class="p" style="left:360px;top:2847px;width:44px;height:27px"></i><i class="p" style="left:410px;top:2847px;width:44px;height:27px"></i><i class="p" style="left:464px;top:2847px;width:44px;height:27px"></i><i class="p" style="left:519px;top:2847px;width:44px;height:27px"></i><i class="p" style="left:568px;top:2847px;width:44px;height:27px"></i><i class="p" style="left:616px;top:2847px;width:44px;height:27px"></i><i class="p" style="left:665px;top:2847px;width:44px;height:27px"></i><i class="p" style="left:714px;top:2847px;width:44px;height:27px"></i><i class="k" style="left:780px;top:2854px"></i><div class="p" style="left:810px;top:2848px;width:39px;height:25px;text-align:left;padding-left:5px">Bullet</div>
<i class="c" style="left:25px;top:2878px"></i><i class="p" style="left:60px;top:2877px;width:199px;height:27px"></i><i class="p" style="left:287px;top:2877px;width:45px;height:27px"></i><i class="p" style="left:360px;top:2877px;width:44px;height:27px"></i><i class="p" style="left:410px;top:2877px;width:44px;height:27px"></i><i class="p" style="left:464px;top:2877px;width:44px;height:27px"></i><i class="p" style="left:519px;top:2877px;width:44px;height:27px"></i><i class="p" style="left:568px;top:2877px;width:44px;height:27px"></i><i class="p" style="left:616px;top:2877px;width:44px;height:27px"></i><i class="p" style="left:665px;top:2877px;width:44px;height:27px"></i><i class="p" style="left:714px;top:2877px;width:44px;height:27px"></i><i class="k" style="left:780px;top:2884px"></i><div class="p" style="left:810px;top:2878px;width:39px;height:25px;text-align:left;padding-left:5px">Bullet</div>

<!-- Armor -->
<div class="h" style="left:16px;top:2924px">Armor</div>
<div class="v" style="left:276px;top:2950px;height:150px"></div><div class="v" style="left:444px;top:2950px;height:150px"></div>
<div class="s cc" style="left:360px;top:2951px">Armor Value</div>
<div class="s" style="left:22px;top:2980px">Roll</div><div class="s" style="left:54px;top:2980px">Type</div>
<div class="s cc" style="left:298px;top:2980px">Dice</div><div class="s cc" style="left:354px;top:2980px">Multiplier</div><div class="s cc" style="left:415px;top:2980px">Modifier</div><div class="s cc" style="left:471px;top:2980px">EV</div><div class="s cc" style="left:549px;top:2971px">Auto<br>Encumbered</div>

<i class="c" style="left:22px;top:3010px"></i><i class="p" style="left:55px;top:3009px;width:199px;height:27px"></i><div class="p" style="left:280px;top:3009px;width:39px;height:27px;text-align:left;padding-left:4px">1</div><div class="p" style="left:332px;top:3009px;width:45px;height:27px">1</div><div class="p" style="left:394px;top:3009px;width:44px;height:27px">0</div><div class="p" style="left:449px;top:3009px;width:45px;height:27px">1</div><div class="p" style="left:505px;top:3009px;width:89px;height:27px;text-align:left;padding-left:5px">No</div>
<i class="c" style="left:22px;top:3040px"></i><i class="p" style="left:55px;top:3039px;width:199px;height:27px"></i><div class="p" style="left:280px;top:3039px;width:39px;height:27px;text-align:left;padding-left:4px">1</div><div class="p" style="left:332px;top:3039px;width:45px;height:27px">1</div><div class="p" style="left:394px;top:3039px;width:44px;height:27px">0</div><div class="p" style="left:449px;top:3039px;width:45px;height:27px">1</div><div class="p" style="left:505px;top:3039px;width:89px;height:27px;text-align:left;padding-left:5px">No</div>
<i class="c" style="left:22px;top:3070px"></i><i class="p" style="left:55px;top:3069px;width:199px;height:27px"></i><div class="p" style="left:280px;top:3069px;width:39px;height:27px;text-align:left;padding-left:4px">1</div><div class="p" style="left:332px;top:3069px;width:45px;height:27px">1</div><div class="p" style="left:394px;top:3069px;width:44px;height:27px">0</div><div class="p" style="left:449px;top:3069px;width:45px;height:27px">1</div><div class="p" style="left:505px;top:3069px;width:89px;height:27px;text-align:left;padding-left:5px">No</div>

</body></html>
